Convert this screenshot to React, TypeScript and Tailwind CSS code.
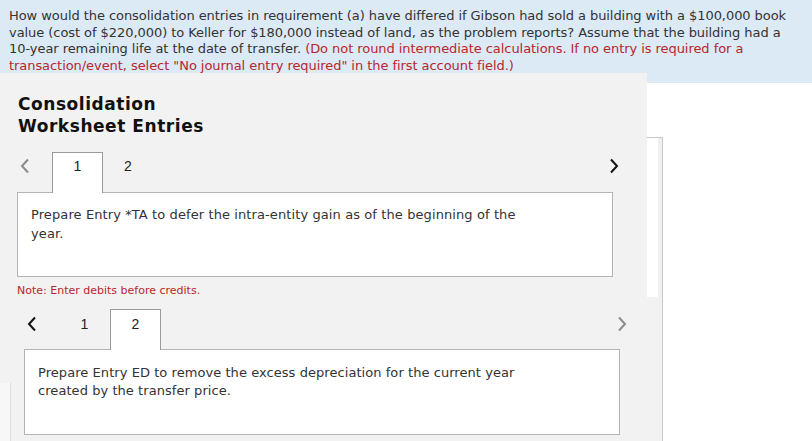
import { FC } from 'react';

type ChevronProps = {
  dir: 'left' | 'right';
  color: string;
};

const Chevron: FC<ChevronProps> = ({ dir, color }) => (
  <svg width="10" height="16" viewBox="0 0 10 16" className="block">
    <polyline
      points={dir === 'left' ? '8,1.5 2,8 8,14.5' : '2,1.5 8,8 2,14.5'}
      fill="none"
      stroke={color}
      strokeWidth="2"
    />
  </svg>
);

const App: FC = () => {
  return (
    <div className="w-[812px] h-[441px] overflow-hidden bg-white flex flex-col font-['DejaVu_Sans',Verdana,sans-serif] text-[#333]">
      {/* question text */}
      <div className="h-[73px] shrink-0 bg-[#dceaf6] px-[9px] pt-[8px] text-[13px] leading-[16.6px] tracking-[-0.06px] whitespace-nowrap">
        How would the consolidation entries in requirement (a) have differed if Gibson had sold a building with a $100,000 book
        <br />
        value (cost of $220,000) to Keller for $180,000 instead of land, as the problem reports? Assume that the building had a
        <br />
        10-year remaining life at the date of transfer.{' '}
        <span className="text-[#b8262c]">
          (Do not round intermediate calculations. If no entry is required for a
          <br />
          transaction/event, select "No journal entry required" in the first account field.)
        </span>
      </div>

      <div className="flex h-[224px] shrink-0">
        {/* first worksheet panel */}
        <div className="w-[647px] bg-[#f2f2f2] pt-[20px] flex flex-col">
          <h2 className="pl-[18px] text-[17px] leading-[22px] font-bold tracking-[0.55px] text-[#111]">
            Consolidation
            <br />
            Worksheet Entries
          </h2>
          <div className="mt-[15px] h-[40px] flex items-start">
            <div className="w-[52px] h-[28px] pl-[20px] flex items-center">
              <Chevron dir="left" color="#8c8c8c" />
            </div>
            <div className="relative z-10 w-[51px] h-[41px] bg-white border border-b-0 border-[#9a9a9a] pt-[5px] text-center font-['Liberation_Sans',Arial,sans-serif] text-[14px] leading-[17px] text-[#222]">
              1
            </div>
            <div className="w-[50px] pt-[6px] text-center font-['Liberation_Sans',Arial,sans-serif] text-[14px] leading-[17px] text-[#222]">
              2
            </div>
            <div className="ml-auto mr-[28px] h-[28px] flex items-center">
              <Chevron dir="right" color="#111" />
            </div>
          </div>
          <div className="ml-[17px] w-[596px] h-[85px] bg-white border border-[#b4b4b4] pl-[13px] pt-[12px] text-[13px] leading-[19px] tracking-[0.1px]">
            Prepare Entry *TA to defer the intra-entity gain as of the beginning of the
            <br />
            year.
          </div>
          <p className="mt-[7px] pl-[17px] text-[11px] leading-[13px] text-[#b8262c]">
            Note: Enter debits before credits.
          </p>
        </div>

        {/* side strip */}
        <div className="flex-1 flex flex-col">
          <div className="h-[10px] bg-[#dceaf6]" />
          <div className="mt-[54px] w-[16px] h-[160px] flex border-t border-r border-[#c8c8c8]">
            <div className="w-[11px] bg-white" />
            <div className="w-[4px] bg-[#f0f0f0]" />
          </div>
        </div>
      </div>

      {/* second worksheet panel */}
      <div className="flex flex-1">
        <div className="w-[663px] bg-[#f2f2f2] border-r border-[#c8c8c8] flex">
          <div className="w-[11px] flex flex-col">
            <div className="mt-[86px] flex-1 bg-[#f7f7f7] border-r border-[#dcdcdc]" />
          </div>
          <div className="flex-1 pt-[12px] flex flex-col">
            <div className="h-[40px] flex items-start">
              <div className="w-[48px] h-[30px] pl-[16px] flex items-center">
                <Chevron dir="left" color="#111" />
              </div>
              <div className="w-[51px] pt-[7px] text-center font-['Liberation_Sans',Arial,sans-serif] text-[14px] leading-[17px] text-[#222]">
                1
              </div>
              <div className="relative z-10 w-[51px] h-[41px] bg-white border border-b-0 border-[#9a9a9a] pt-[6px] text-center font-['Liberation_Sans',Arial,sans-serif] text-[14px] leading-[17px] text-[#222]">
                2
              </div>
              <div className="ml-auto mr-[35px] h-[30px] flex items-center">
                <Chevron dir="right" color="#8c8c8c" />
              </div>
            </div>
            <div className="ml-[13px] w-[596px] h-[86px] bg-white border border-[#b4b4b4] pl-[13px] pt-[14px] text-[13px] leading-[18px] tracking-[0.06px]">
              Prepare Entry ED to remove the excess depreciation for the current year
              <br />
              created by the transfer price.
            </div>
          </div>
        </div>
        <div className="flex-1 bg-white" />
      </div>
    </div>
  );
};

export default App;
